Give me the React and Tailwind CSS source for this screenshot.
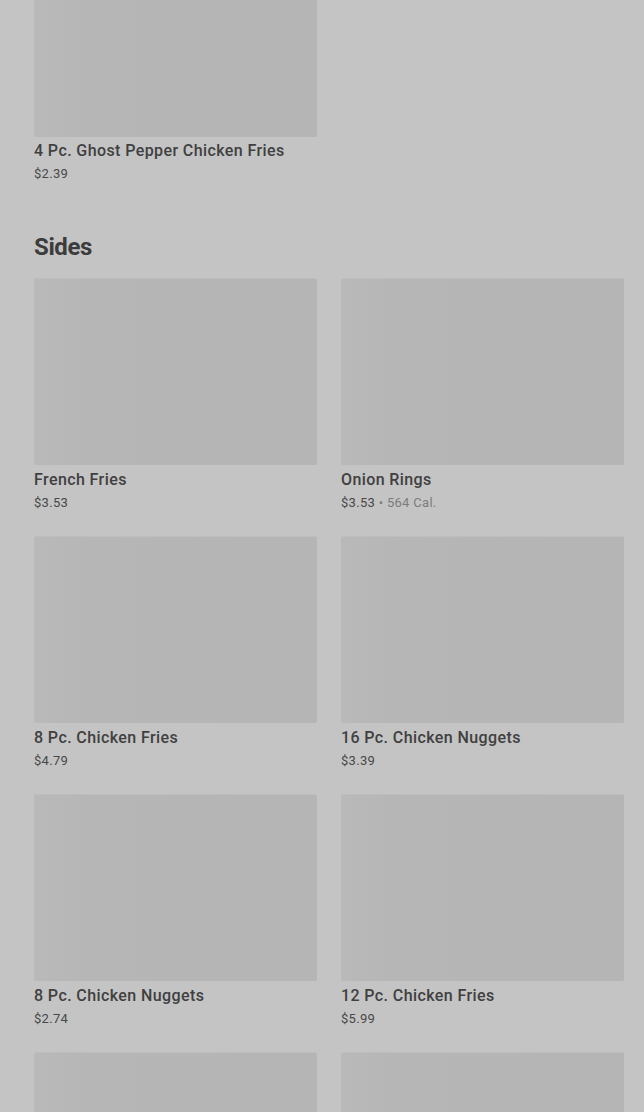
const sides = [
  { name: 'French Fries', price: '$3.53' },
  { name: 'Onion Rings', price: '$3.53', cal: '564 Cal.' },
  { name: '8 Pc. Chicken Fries', price: '$4.79' },
  { name: '16 Pc. Chicken Nuggets', price: '$3.39' },
  { name: '8 Pc. Chicken Nuggets', price: '$2.74' },
  { name: '12 Pc. Chicken Fries', price: '$5.99' },
  { name: '', price: '' },
  { name: '', price: '' },
]

function MenuCard({ item, textClass = 'mt-[5px]' }) {
  return (
    <div className="flex flex-col">
      <div className="h-[187px] w-full rounded-[2px] border-t border-[#bdbdbd] bg-gradient-to-r from-[#b9b9b9] via-[#b6b6b6] via-20% to-[#b5b5b5]" />
      {item.name && (
        <div className={`${textClass} flex flex-col`}>
          <span className="text-[16px] font-medium leading-5 tracking-[0.4px] text-[#404040]">
            {item.name}
          </span>
          <span className="mt-[4px] text-[13px] leading-[18px] tracking-[0.3px] text-[#484848]">
            {item.price}
            {item.cal && (
              <span className="text-[#7c7c7c]">
                {' '}
                • {item.cal}
              </span>
            )}
          </span>
        </div>
      )}
    </div>
  )
}

export default function App() {
  return (
    <div
      className="h-[1112px] w-full overflow-hidden bg-[#c4c4c4] pl-[34px] pr-[20px]"
      style={{ fontFamily: 'Roboto, "Noto Sans", sans-serif' }}
    >
      <div className="-mt-[50px] grid grid-cols-2 gap-x-6">
        <MenuCard
          item={{ name: '4 Pc. Ghost Pepper Chicken Fries', price: '$2.39' }}
          textClass="mt-[4px]"
        />
      </div>

      <h2 className="mt-[48px] text-[24px] font-bold leading-8 tracking-[-0.4px] text-[#3c3c3c]">
        Sides
      </h2>

      <div className="mt-[15px] grid grid-cols-2 gap-x-6 gap-y-[24px]">
        {sides.map((item, i) => (
          <MenuCard key={i} item={item} />
        ))}
      </div>
    </div>
  )
}
